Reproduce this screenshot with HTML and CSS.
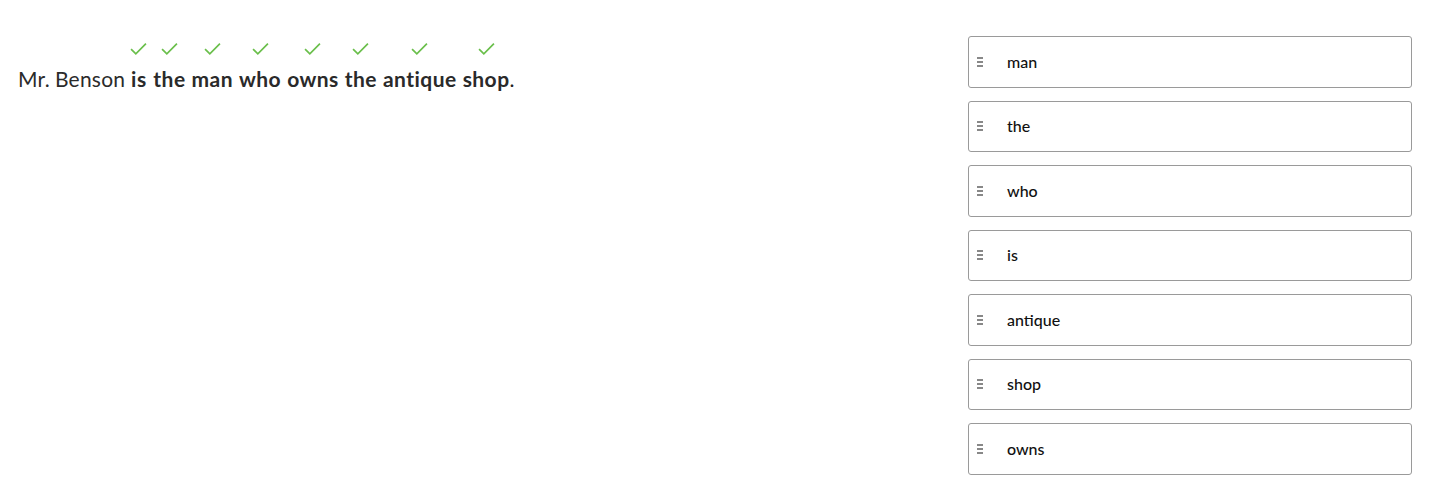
FILE: index.html
```html
<!DOCTYPE html>
<html>
<head>
<meta charset="utf-8">
<link rel="stylesheet" href="styles.css">
</head>
<body>
<div class="page">
  <div class="sentence">
    <span class="word plain">Mr.</span>
    <span class="word plain">Benson</span>
    <span class="word"><span class="check"><svg viewBox="0 0 16 12"><path d="M1 6.5 L5.5 11 L15 1.5"/></svg></span>is</span>
    <span class="word"><span class="check"><svg viewBox="0 0 16 12"><path d="M1 6.5 L5.5 11 L15 1.5"/></svg></span>the</span>
    <span class="word"><span class="check"><svg viewBox="0 0 16 12"><path d="M1 6.5 L5.5 11 L15 1.5"/></svg></span>man</span>
    <span class="word"><span class="check"><svg viewBox="0 0 16 12"><path d="M1 6.5 L5.5 11 L15 1.5"/></svg></span>who</span>
    <span class="word"><span class="check"><svg viewBox="0 0 16 12"><path d="M1 6.5 L5.5 11 L15 1.5"/></svg></span>owns</span>
    <span class="word"><span class="check"><svg viewBox="0 0 16 12"><path d="M1 6.5 L5.5 11 L15 1.5"/></svg></span>the</span>
    <span class="word"><span class="check"><svg viewBox="0 0 16 12"><path d="M1 6.5 L5.5 11 L15 1.5"/></svg></span>antique</span>
    <span class="word last"><span class="check"><svg viewBox="0 0 16 12"><path d="M1 6.5 L5.5 11 L15 1.5"/></svg></span>shop</span><span class="plain">.</span>
  </div>
  <ul class="tiles">
    <li class="tile"><span class="grip"><i></i><i></i><i></i></span><span class="label">man</span></li>
    <li class="tile"><span class="grip"><i></i><i></i><i></i></span><span class="label">the</span></li>
    <li class="tile"><span class="grip"><i></i><i></i><i></i></span><span class="label">who</span></li>
    <li class="tile"><span class="grip"><i></i><i></i><i></i></span><span class="label">is</span></li>
    <li class="tile"><span class="grip"><i></i><i></i><i></i></span><span class="label">antique</span></li>
    <li class="tile"><span class="grip"><i></i><i></i><i></i></span><span class="label">shop</span></li>
    <li class="tile"><span class="grip"><i></i><i></i><i></i></span><span class="label">owns</span></li>
  </ul>
</div>
</body>
</html>
```
FILE: styles.css
```css
* { box-sizing: border-box; }
html, body { margin: 0; background: #fff; }
body { font-family: Lato, "Open Sans", sans-serif; color: #222; }
.page {
  display: flex;
  justify-content: space-between;
  align-items: flex-start;
  padding: 36px 24px 0 18px;
}
.sentence {
  padding-top: 5px;
  font-size: 21px;
  line-height: 28px;
  display: flex;
  align-items: flex-end;
  white-space: nowrap;
}
.word {
  display: inline-flex;
  flex-direction: column;
  align-items: center;
  font-weight: 700;
  letter-spacing: 0.45px;
  color: #2a2a2a;
  margin-right: 6px;
}
.word.last { margin-right: 0; }
.word.plain { font-weight: 400; letter-spacing: 0.25px; margin-right: 5px; color: #2b2b2b; }
.plain { font-weight: 400; }
.check {
  display: block;
  height: 24px;
  padding-top: 1px;
}
.check svg {
  width: 17px;
  height: 13px;
  display: block;
  fill: none;
  stroke: #6abf4b;
  stroke-width: 1.6;
}
.tiles {
  list-style: none;
  margin: 0;
  padding: 0;
  width: 444px;
  display: flex;
  flex-direction: column;
  gap: 13px;
}
.tile {
  height: 51.5px;
  border: 1px solid #9a9a9a;
  border-radius: 3px;
  display: flex;
  align-items: center;
  padding-left: 8px;
  font-size: 16px;
  font-weight: 500;
  color: #111;
}
.grip {
  display: flex;
  flex-direction: column;
  gap: 2px;
  width: 6px;
  margin-right: 24px;
}
.grip i {
  display: block;
  height: 2px;
  background: #888;
}
.label { line-height: 20px; }
```
